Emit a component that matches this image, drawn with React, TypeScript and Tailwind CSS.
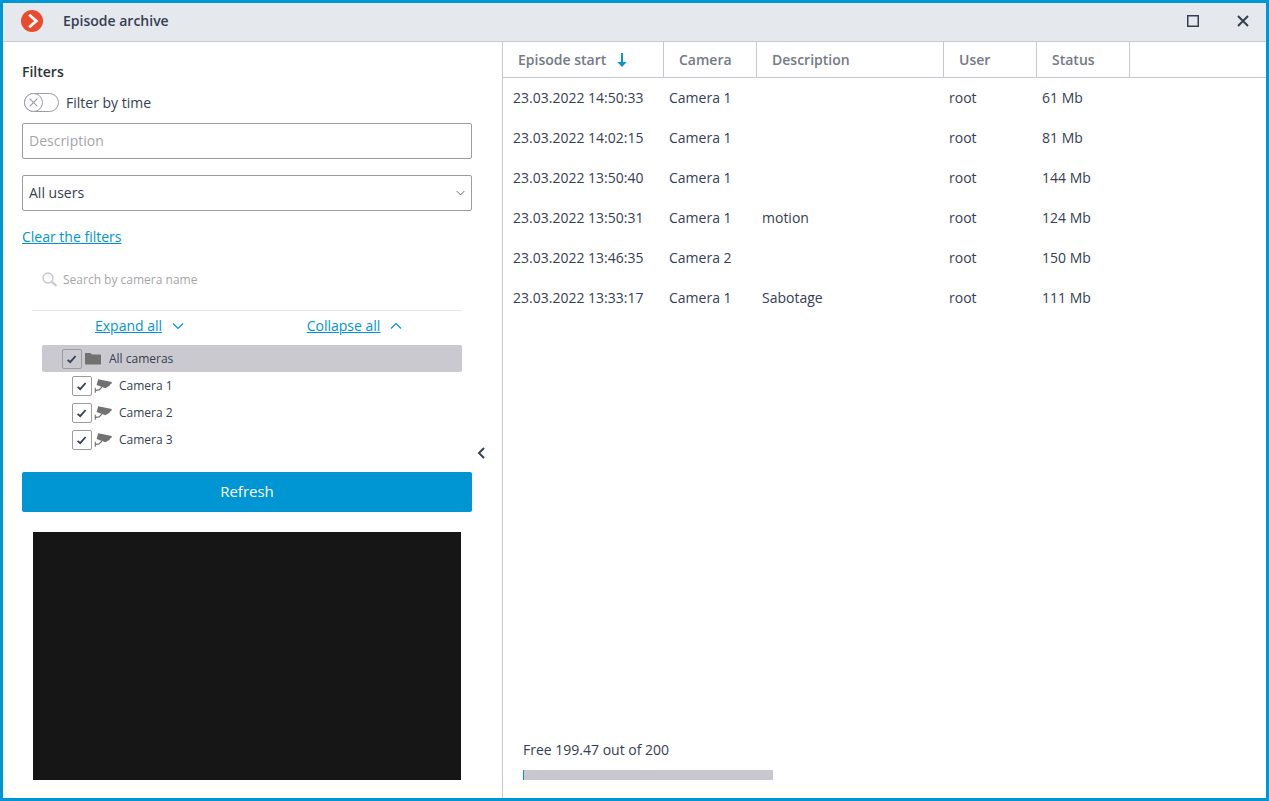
import React, { useState } from 'react';

interface Episode {
  start: string;
  camera: string;
  description: string;
  user: string;
  status: string;
}

const EPISODES: Episode[] = [
  { start: '23.03.2022 14:50:33', camera: 'Camera 1', description: '', user: 'root', status: '61 Mb' },
  { start: '23.03.2022 14:02:15', camera: 'Camera 1', description: '', user: 'root', status: '81 Mb' },
  { start: '23.03.2022 13:50:40', camera: 'Camera 1', description: '', user: 'root', status: '144 Mb' },
  { start: '23.03.2022 13:50:31', camera: 'Camera 1', description: 'motion', user: 'root', status: '124 Mb' },
  { start: '23.03.2022 13:46:35', camera: 'Camera 2', description: '', user: 'root', status: '150 Mb' },
  { start: '23.03.2022 13:33:17', camera: 'Camera 1', description: 'Sabotage', user: 'root', status: '111 Mb' },
];

const CAMERAS = ['Camera 1', 'Camera 2', 'Camera 3'];

const FREE = 199.47;
const TOTAL = 200;

function Chevron({ className, up = false }: { className: string; up?: boolean }) {
  return (
    <svg className={className} viewBox="0 0 12 8" fill="none" stroke="currentColor" aria-hidden>
      <path d={up ? 'M1 6.5 6 1.5l5 5' : 'M1 1.5l5 5 5-5'} strokeWidth="1.2" />
    </svg>
  );
}

function CameraIcon() {
  return (
    <svg className="h-4 w-[18px]" viewBox="0 0 18 16" aria-hidden>
      <path d="M4.2 1.2 17.8 4l-.4 2-1.2.3-.6 1.5-4.2 2.4L2.6 7z" fill="#717171" />
      <path d="M1.3 9.8v5M1.5 12.4l3.6-.5L8 9" fill="none" stroke="#717171" strokeWidth="1.1" />
    </svg>
  );
}

function FolderIcon() {
  return (
    <svg className="h-4 w-[18px]" viewBox="0 0 18 16" aria-hidden>
      <path d="M1 2.6q0-.6.6-.6h5l1.2 1.4h8.6q.6 0 .6.6v9q0 .6-.6.6H1.6q-.6 0-.6-.6z" fill="#717171" />
    </svg>
  );
}

interface TreeItemProps {
  label: string;
  icon: React.ReactNode;
  checked: boolean;
  onChange: (checked: boolean) => void;
  root?: boolean;
}

function TreeItem({ label, icon, checked, onChange, root = false }: TreeItemProps) {
  return (
    <label
      className={
        root
          ? 'flex h-[27px] items-center rounded-xs bg-[#cac9cf] pl-5 text-xs'
          : 'flex h-[27px] items-center pl-[30px] text-xs'
      }
    >
      <span className="grid place-items-center">
        <input
          type="checkbox"
          checked={checked}
          onChange={(e) => onChange(e.target.checked)}
          className="peer col-start-1 row-start-1 h-5 w-5 appearance-none rounded-xs border border-[#9c9ca0]"
        />
        <svg
          className="pointer-events-none invisible col-start-1 row-start-1 h-3 w-3 peer-checked:visible"
          viewBox="0 0 12 12"
          fill="none"
          stroke="#354052"
          aria-hidden
        >
          <path d="M1.6 6.8 4.2 9.2 9.6 3" strokeWidth="1.8" />
        </svg>
      </span>
      <span className="ml-0.5">{icon}</span>
      <span className="ml-[7px]">{label}</span>
    </label>
  );
}

function Filters() {
  const [byTime, setByTime] = useState(false);
  const [checked, setChecked] = useState<string[]>(CAMERAS);

  const toggle = (name: string, on: boolean) =>
    setChecked((prev) => (on ? [...prev, name] : prev.filter((c) => c !== name)));

  return (
    <aside className="flex w-[500px] shrink-0 border-r border-[#c9c8ce]">
      <div className="flex flex-1 flex-col pt-5 pb-[18px] pl-[19px]">
        <h2 className="font-semibold text-[#2d3436]">Filters</h2>

        <label className="mt-[11px] flex items-center">
          <span className="grid">
            <input
              type="checkbox"
              role="switch"
              checked={byTime}
              onChange={(e) => setByTime(e.target.checked)}
              className="col-start-1 row-start-1 ml-0.5 h-5 w-9 appearance-none"
            />
            <svg
              className="pointer-events-none col-start-1 row-start-1 ml-0.5 h-5 w-9"
              viewBox="0 0 36 20"
              fill="none"
              stroke="#9c9ca6"
              aria-hidden
            >
              <rect x=".5" y=".5" width="34" height="18" rx="9" />
              <circle cx="9.5" cy="9.5" r="9" fill="#fff" />
              <path d="M5.7 5.7l7.6 7.6M13.3 5.7l-7.6 7.6" strokeWidth="1.2" />
            </svg>
          </span>
          <span className="ml-1.5">Filter by time</span>
        </label>

        <input
          type="text"
          aria-label="Description"
          placeholder="Description"
          className="mt-2.5 h-9 shrink-0 rounded-xs border border-[#9c9ca0] px-1.5 pb-0.5 placeholder:text-[#a5a5a8]"
        />

        <div className="mt-4 grid shrink-0 items-center">
          <select
            aria-label="User"
            className="col-start-1 row-start-1 h-9 appearance-none rounded-xs border border-[#9c9ca0] bg-white px-1.5"
          >
            <option>All users</option>
          </select>
          <Chevron className="pointer-events-none col-start-1 row-start-1 mr-[7px] h-1.5 w-[9px] justify-self-end text-[#55555c]" />
        </div>

        <a href="#clear" className="mt-4 self-start text-[#0095d3] underline">
          Clear the filters
        </a>

        <div className="mt-2.5 ml-2.5 flex w-[430px] flex-col">
          <label className="flex h-[54px] items-center border-b border-[#e6e5ec] pb-2 pl-2.5">
            <svg className="h-4 w-4" viewBox="0 0 16 16" fill="none" stroke="#c6c5cb" aria-hidden>
              <circle cx="6" cy="6" r="5" strokeWidth="1.3" />
              <path d="M9.8 9.8l4.7 4.2" strokeWidth="2" />
            </svg>
            <input
              type="text"
              aria-label="Search by camera name"
              placeholder="Search by camera name"
              className="ml-[5px] flex-1 text-xs placeholder:text-[#a5a5a8]"
            />
          </label>

          <div className="flex h-[34px] items-center pb-1 text-[#0095d3]">
            <div className="flex flex-1 items-center justify-center gap-2.5">
              <a href="#expand" className="underline">Expand all</a>
              <Chevron className="h-2 w-3" />
            </div>
            <div className="flex flex-1 items-center justify-center gap-2.5">
              <a href="#collapse" className="underline">Collapse all</a>
              <Chevron className="h-2 w-3" up />
            </div>
          </div>

          <div className="ml-2.5">
            <TreeItem
              root
              label="All cameras"
              icon={<FolderIcon />}
              checked={checked.length === CAMERAS.length}
              onChange={(on) => setChecked(on ? CAMERAS : [])}
            />
            {CAMERAS.map((name) => (
              <TreeItem
                key={name}
                label={name}
                icon={<CameraIcon />}
                checked={checked.includes(name)}
                onChange={(on) => toggle(name, on)}
              />
            ))}
          </div>
        </div>

        <button type="button" className="mt-[19px] h-10 shrink-0 rounded-xs bg-[#0095d3] text-[15px] text-white">
          Refresh
        </button>

        {/* episode preview */}
        <div className="mx-[11px] mt-5 min-h-40 flex-1 bg-[#161616]" />
      </div>

      <button type="button" aria-label="Hide filters" className="flex w-[30px] items-center pt-[66px] pl-[5px]">
        <svg className="h-3 w-2" viewBox="0 0 8 12" fill="none" stroke="#354052" aria-hidden>
          <path d="M7 1 2 6l5 5" strokeWidth="2" />
        </svg>
      </button>
    </aside>
  );
}

function EpisodeTable() {
  const head = 'h-9 border-r border-b border-[#c9c8ce] pl-[15px] text-left font-semibold';

  return (
    <table className="w-full table-fixed border-separate border-spacing-0">
      <colgroup>
        <col className="w-[161px]" />
        <col className="w-[93px]" />
        <col className="w-[187px]" />
        <col className="w-[93px]" />
        <col className="w-[93px]" />
        <col />
      </colgroup>
      <thead className="text-[#747a86]">
        <tr>
          <th className={head}>
            <span className="flex items-center gap-[11px]">
              Episode start
              <svg className="h-4 w-2.5" viewBox="0 0 10 16" aria-hidden>
                <path d="M4 1h2v9h3.6L5 15 .4 10H4z" fill="#0095d3" />
              </svg>
            </span>
          </th>
          <th className={head}>Camera</th>
          <th className={head}>Description</th>
          <th className={head}>User</th>
          <th className={head}>Status</th>
          <td className="border-b border-[#c9c8ce]" />
        </tr>
      </thead>
      <tbody>
        {EPISODES.map((e) => (
          <tr key={e.start} className="h-10">
            <td className="pl-2.5">{e.start}</td>
            <td className="pl-[5px]">{e.camera}</td>
            <td className="pl-[5px]">{e.description}</td>
            <td className="pl-[5px]">{e.user}</td>
            <td className="pl-[5px]">{e.status}</td>
            <td />
          </tr>
        ))}
      </tbody>
    </table>
  );
}

export default function App() {
  const usedPercent = ((TOTAL - FREE) / TOTAL) * 100;

  return (
    <div className="flex min-h-screen flex-col border-3 border-[#0095d3] bg-white font-['Open_Sans',sans-serif] text-sm text-[#354052]">
      <header className="flex h-[39px] shrink-0 items-center border-b border-[#c9c8ce] bg-[#e5e8ed] pr-[17px] pb-0.5 pl-[18px]">
        <svg className="h-[22px] w-[22px]" viewBox="0 0 22 22" aria-hidden>
          <circle cx="11" cy="11" r="11" fill="#e94b2e" />
          <path d="M8.2 4.8l7 6.2-7 6.2" fill="none" stroke="#fff" strokeWidth="2.8" />
        </svg>
        <h1 className="ml-5 font-semibold">Episode archive</h1>
        <div className="ml-auto flex items-center gap-[38px]">
          <button type="button" aria-label="Maximize">
            <svg className="h-3 w-3" viewBox="0 0 12 12" fill="none" stroke="#354052" aria-hidden>
              <path d="M.75.75h10.5v10.5H.75z" strokeWidth="1.5" />
            </svg>
          </button>
          <button type="button" aria-label="Close">
            <svg className="h-3 w-3" viewBox="0 0 12 12" fill="none" stroke="#354052" aria-hidden>
              <path d="M1 1l10 10M11 1L1 11" strokeWidth="2" />
            </svg>
          </button>
        </div>
      </header>

      <div className="flex flex-1">
        <Filters />
        <main className="flex flex-1 flex-col">
          <EpisodeTable />
          <div className="mt-auto pb-[18px] pl-5">
            <p>Free {FREE} out of {TOTAL}</p>
            <div
              role="progressbar"
              aria-label="Used space"
              aria-valuenow={TOTAL - FREE}
              aria-valuemax={TOTAL}
              className="mt-2.5 h-2.5 w-[250px] bg-[#c9c8ce]"
            >
              <div className="h-full min-w-px bg-[#0095d3]" style={{ width: `${usedPercent}%` }} />
            </div>
          </div>
        </main>
      </div>
    </div>
  );
}
